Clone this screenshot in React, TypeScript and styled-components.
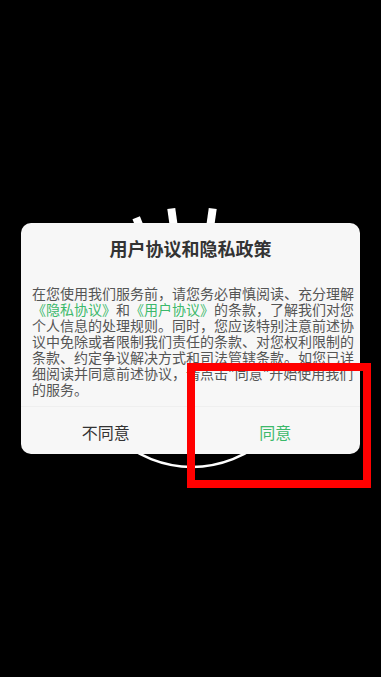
import React from 'react'
import styled, { createGlobalStyle } from 'styled-components'

const GlobalStyle = createGlobalStyle`
  html, body {
    margin: 0;
    padding: 0;
    background: #000;
  }
  body {
    font-family: 'Noto Sans CJK SC', 'Noto Sans', sans-serif;
  }
`

const Screen = styled.div`
  position: relative;
  width: 100vw;
  height: 100vh;
  overflow: hidden;
  background: #000;
  display: flex;
  align-items: center;
  justify-content: center;
`

const Logo = styled.svg`
  position: absolute;
  left: 32px;
  top: 196px;
  width: 320px;
  height: 320px;
`

const Dialog = styled.div`
  position: relative;
  width: 339px;
  background: #f7f7f7;
  border-radius: 10px;
  overflow: hidden;
  display: flex;
  flex-direction: column;
`

const Title = styled.div`
  padding-top: 13px;
  font-size: 18px;
  line-height: 24px;
  font-weight: 700;
  color: #333;
  text-align: center;
`

const Body = styled.div`
  margin-top: 25px;
  padding: 0 4px 9px 11px;
  font-size: 14px;
  line-height: 16px;
  color: #555;
  white-space: nowrap;
`

const Link = styled.span`
  color: #3cb96b;
`

const Actions = styled.div`
  display: grid;
  grid-template-columns: 1fr 1fr;
  height: 47px;
  border-top: 1px solid #efefef;
`

const Action = styled.button<{ primary?: boolean }>`
  border: none;
  background: transparent;
  padding: 0;
  font-family: inherit;
  font-size: 16px;
  color: ${(props) => (props.primary ? '#3cb96b' : '#333')};
  display: flex;
  align-items: center;
  justify-content: center;
  padding-top: 2px;
`

const Highlight = styled.div`
  position: absolute;
  left: 187px;
  top: 363px;
  width: 184px;
  height: 125px;
  box-sizing: border-box;
  border: 8px solid #ff0000;
  pointer-events: none;
`

const ticks = [-22, -8, 8]

export default function App() {
  return (
    <>
      <GlobalStyle />
      <Screen>
        <Logo viewBox="0 0 320 320">
          <circle cx="160" cy="160" r="111" fill="none" stroke="#fff" strokeWidth="2.5" />
          {ticks.map((a) => (
            <rect
              key={a}
              x="156"
              y="11"
              width="8"
              height="17"
              fill="#fff"
              transform={`rotate(${a} 160 160)`}
            />
          ))}
        </Logo>
        <Dialog>
          <Title>用户协议和隐私政策</Title>
          <Body>
            在您使用我们服务前，请您务必审慎阅读、充分理解
            <br />
            <Link>《隐私协议》</Link>和<Link>《用户协议》</Link>的条款，了解我们对您
            <br />
            个人信息的处理规则。同时，您应该特别注意前述协
            <br />
            议中免除或者限制我们责任的条款、对您权利限制的
            <br />
            条款、约定争议解决方式和司法管辖条款。如您已详
            <br />
            细阅读并同意前述协议，请点击"同意"开始使用我们
            <br />
            的服务。
          </Body>
          <Actions>
            <Action>不同意</Action>
            <Action primary>同意</Action>
          </Actions>
        </Dialog>
        <Highlight />
      </Screen>
    </>
  )
}
